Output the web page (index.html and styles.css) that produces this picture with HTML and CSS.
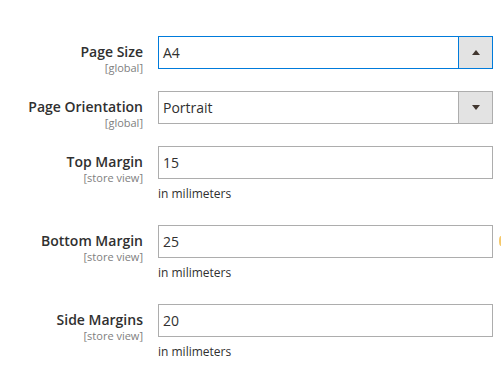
FILE: index.html
```html
<!DOCTYPE html>
<html lang="en">
<head>
    <meta charset="UTF-8">
    <title>PDF Print-outs</title>
    <link rel="stylesheet" href="styles.css">
</head>
<body>
    <div class="fieldset">
        <div class="field">
            <div class="label">
                <span class="label-text">Page Size</span>
                <span class="scope">[global]</span>
            </div>
            <div class="control">
                <div class="select is-open">
                    <span class="select-value">A4</span>
                    <span class="select-action"><span class="arrow up"></span></span>
                </div>
            </div>
        </div>

        <div class="field">
            <div class="label">
                <span class="label-text">Page Orientation</span>
                <span class="scope">[global]</span>
            </div>
            <div class="control">
                <div class="select">
                    <span class="select-value">Portrait</span>
                    <span class="select-action"><span class="arrow down"></span></span>
                </div>
            </div>
        </div>

        <div class="field">
            <div class="label">
                <span class="label-text">Top Margin</span>
                <span class="scope">[store view]</span>
            </div>
            <div class="control">
                <input class="input-text" type="text" value="15">
                <div class="note">in milimeters</div>
            </div>
        </div>

        <div class="field">
            <div class="label">
                <span class="label-text">Bottom Margin</span>
                <span class="scope">[store view]</span>
            </div>
            <div class="control">
                <input class="input-text" type="text" value="25">
                <div class="note">in milimeters</div>
                <span class="tooltip-edge"></span>
            </div>
        </div>

        <div class="field">
            <div class="label">
                <span class="label-text">Side Margins</span>
                <span class="scope">[store view]</span>
            </div>
            <div class="control">
                <input class="input-text" type="text" value="20">
                <div class="note">in milimeters</div>
            </div>
        </div>
    </div>
</body>
</html>
```

FILE: styles.css
```css
* {
    margin: 0;
    padding: 0;
    box-sizing: border-box;
}

body {
    font-family: 'Open Sans', 'Liberation Sans', sans-serif;
    background: #fff;
    color: #303030;
    overflow: hidden;
}

.fieldset {
    padding-top: 36px;
}

.field {
    display: flex;
    margin-bottom: 17px;
}

.label {
    width: 143px;
    padding-top: 6px;
    text-align: right;
    display: flex;
    flex-direction: column;
    align-items: flex-end;
}

.label-text {
    font-size: 14px;
    font-weight: 600;
    line-height: 19px;
    color: #303030;
}

.scope {
    font-size: 11px;
    line-height: 13px;
    color: #808080;
}

.control {
    position: relative;
    margin-left: 15px;
    width: 335px;
}

.select,
.input-text {
    display: flex;
    width: 100%;
    height: 33px;
    border: 1px solid #adadad;
    background: #fff;
    font-family: inherit;
    font-size: 14px;
    color: #303030;
}

.input-text {
    padding: 0 4px;
    outline: none;
}

.select-value {
    flex: 1;
    padding-left: 4px;
    line-height: 31px;
}

.select-action {
    width: 34px;
    border-left: 1px solid #adadad;
    background: #e3e3e3;
    display: flex;
    align-items: center;
    justify-content: center;
}

.select.is-open {
    border-color: #007bdb;
}

.select.is-open .select-action {
    border-left-color: #007bdb;
}

.arrow {
    width: 0;
    height: 0;
    border-left: 4px solid transparent;
    border-right: 4px solid transparent;
}

.arrow.up {
    border-bottom: 5px solid #41362f;
}

.arrow.down {
    border-top: 5px solid #41362f;
}

.note {
    margin-top: 6px;
    padding-bottom: 5px;
    font-size: 12px;
    line-height: 18px;
    color: #303030;
}

.tooltip-edge {
    position: absolute;
    left: 341px;
    top: 11px;
    width: 4px;
    height: 10px;
    border-radius: 50%;
    background: #f5c86a;
}
```
